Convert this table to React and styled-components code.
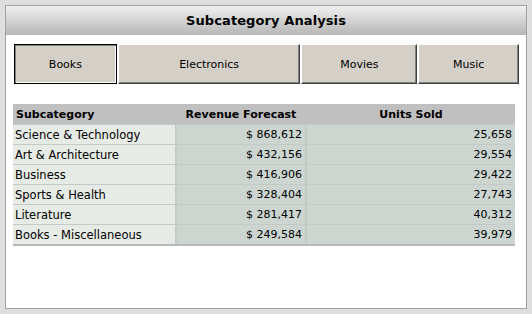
import React, { useState } from 'react';
import styled, { createGlobalStyle } from 'styled-components';

const GlobalStyle = createGlobalStyle`
  html, body {
    margin: 0;
    padding: 0;
    background: #dedede;
  }
  * {
    box-sizing: border-box;
  }
`;

const Page = styled.div`
  width: 532px;
  height: 314px;
  padding: 5px 0 0 5px;
  font-family: "DejaVu Sans", Verdana, sans-serif;
  color: #000;
`;

const Panel = styled.div`
  width: 522px;
  height: 304px;
  background: #fff;
  border: 1px solid #a2a2a2;
  display: flex;
  flex-direction: column;
`;

const Header = styled.div`
  height: 29px;
  background: linear-gradient(#f0f0f0, #b6b6b6);
  display: flex;
  align-items: center;
  justify-content: center;
  font-size: 13px;
  font-weight: bold;
  letter-spacing: 0.1px;
`;

const Content = styled.div`
  padding: 9px 7px 0 7px;
  display: flex;
  flex-direction: column;
  gap: 20px;
`;

const ButtonBar = styled.div`
  display: flex;
  gap: 1px;
  margin-left: 1px;
`;

const TabButton = styled.button`
  width: ${p => p.$w}px;
  height: 40px;
  padding: 0;
  background: #d4d0c8;
  font-family: "DejaVu Sans", Verdana, sans-serif;
  font-size: 11px;
  color: #000;
  border-style: solid;
  border-width: 1px;
  border-color: ${p => (p.$active ? '#000' : '#ffffff #404040 #404040 #ffffff')};
  box-shadow: ${p =>
    p.$active
      ? 'inset 1px 1px 0 #808080, inset -1px -1px 0 #ffffff'
      : 'inset -1px -1px 0 #808080'};
  cursor: pointer;
`;

const Table = styled.div`
  width: 502px;
  border-bottom: 2px solid #b9b9b9;
`;

const cols = '162px 128px 1fr';

const HeadRow = styled.div`
  display: grid;
  grid-template-columns: ${cols};
  column-gap: 2px;
  height: 20px;
  background: #c0c0c0;
  align-items: center;
  font-size: 11px;
  font-weight: bold;
`;

const HeadCell = styled.div`
  padding: 0 3px;
  text-align: ${p => p.$align || 'left'};
`;

const Row = styled.div`
  display: grid;
  grid-template-columns: ${cols};
  column-gap: 2px;
  height: 20px;
  background: #c6cac6;
  padding-top: 1px;
  font-size: 11px;
`;

const Cell = styled.div`
  display: flex;
  align-items: center;
  justify-content: ${p => (p.$right ? 'flex-end' : 'flex-start')};
  padding: 0 3px 0 2px;
  background: ${p => (p.$first ? '#e6ebe6' : '#ccd5d0')};
  font-size: ${p => (p.$first ? '11.5px' : '11px')};
  white-space: nowrap;
`;

const tabs = [
  { name: 'Books', w: 103 },
  { name: 'Electronics', w: 183 },
  { name: 'Movies', w: 116 },
  { name: 'Music', w: 101 },
];

const rows = [
  ['Science & Technology', '868,612', '25,658'],
  ['Art & Architecture', '432,156', '29,554'],
  ['Business', '416,906', '29,422'],
  ['Sports & Health', '328,404', '27,743'],
  ['Literature', '281,417', '40,312'],
  ['Books - Miscellaneous', '249,584', '39,979'],
];

export default function App() {
  const [active, setActive] = useState('Books');

  return (
    <Page>
      <GlobalStyle />
      <Panel>
        <Header>Subcategory Analysis</Header>
        <Content>
          <ButtonBar>
            {tabs.map(t => (
              <TabButton
                key={t.name}
                $w={t.w}
                $active={active === t.name}
                onClick={() => setActive(t.name)}
              >
                {t.name}
              </TabButton>
            ))}
          </ButtonBar>
          <Table>
            <HeadRow>
              <HeadCell>Subcategory</HeadCell>
              <HeadCell $align="center">Revenue Forecast</HeadCell>
              <HeadCell $align="center">Units Sold</HeadCell>
            </HeadRow>
            {rows.map(r => (
              <Row key={r[0]}>
                <Cell $first>{r[0]}</Cell>
                <Cell $right>$&nbsp;{r[1]}</Cell>
                <Cell $right>{r[2]}</Cell>
              </Row>
            ))}
          </Table>
        </Content>
      </Panel>
    </Page>
  );
}
